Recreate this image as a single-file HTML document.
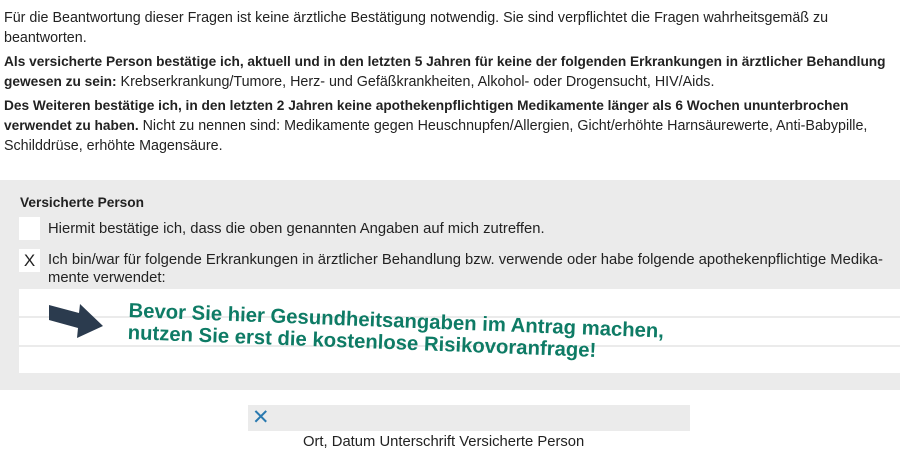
<!DOCTYPE html>
<html><head><meta charset="utf-8"><style>
body{margin:0;width:900px;height:463px;overflow:hidden;background:#fff;font-family:"Liberation Sans",sans-serif;color:#222;position:relative}
.t{position:absolute;left:4px;font-size:14.3px;line-height:20px;white-space:nowrap}
b{font-weight:bold;font-size:13.7px}
.s{font-size:14.8px}
.gray{position:absolute;left:0;top:180px;width:900px;height:210px;background:#ebebeb}
.f{position:absolute;left:19px;width:881px;background:#fff}
.gt{position:absolute;font-weight:bold;color:#0e7b65;font-size:20.3px;line-height:22px;white-space:nowrap;transform-origin:0 0}
</style></head><body>
<div class="t" style="top:8px">Für die Beantwortung dieser Fragen ist keine ärztliche Bestätigung notwendig. Sie sind verpflichtet die Fragen wahrheitsgemäß zu</div>
<div class="t" style="top:28px">beantworten.</div>
<div class="t" style="top:52px"><b>Als versicherte Person bestätige ich, aktuell und in den letzten 5 Jahren für keine der folgenden Erkrankungen in ärztlicher Behandlung</b></div>
<div class="t" style="top:72px"><b>gewesen zu sein:</b> Krebserkrankung/Tumore, Herz- und Gefäßkrankheiten, Alkohol- oder Drogensucht, HIV/Aids.</div>
<div class="t" style="top:96px"><b>Des Weiteren bestätige ich, in den letzten 2 Jahren keine apothekenpflichtigen Medikamente länger als 6 Wochen ununterbrochen</b></div>
<div class="t" style="top:116px"><b>verwendet zu haben.</b> Nicht zu nennen sind: Medikamente gegen Heuschnupfen/Allergien, Gicht/erhöhte Harnsäurewerte, Anti-Babypille,</div>
<div class="t" style="top:136px">Schilddrüse, erhöhte Magensäure.</div>
<div class="gray"></div>
<div class="t" style="top:193px;left:20px"><b>Versicherte Person</b></div>
<div style="position:absolute;left:19px;top:217px;width:21px;height:23px;background:#fff"></div>
<div class="t s" style="top:219px;left:48px">Hiermit bestätige ich, dass die oben genannten Angaben auf mich zutreffen.</div>
<div style="position:absolute;left:19px;top:249px;width:21px;height:23px;background:#fff;font-size:17px;line-height:23px;text-align:center">X</div>
<div class="t s" style="top:250px;left:48px">Ich bin/war für folgende Erkrankungen in ärztlicher Behandlung bzw. verwende oder habe folgende apothekenpflichtige Medika-</div>
<div class="t s" style="top:268px;left:48px">mente verwendet:</div>
<div class="f" style="top:289px;height:27px"></div>
<div class="f" style="top:318px;height:27px"></div>
<div class="f" style="top:347px;height:26px"></div>
<svg style="position:absolute;left:45px;top:290px" width="65" height="50"><polygon points="4,15 34,23 35,14 58,36 32,48 33,38 4,30" fill="#2b3b4e"/></svg>
<div class="gt" style="left:129px;top:300px;transform:rotate(2.2deg)">Bevor Sie hier Gesundheitsangaben im Antrag machen,<br>nutzen Sie erst die kostenlose Risikovoranfrage!</div>
<div style="position:absolute;left:248px;top:405px;width:442px;height:26px;background:#ebebeb"></div>
<div style="position:absolute;left:252px;top:405px;font-size:21px;line-height:26px;color:#2a7ab0">✕</div>
<div class="t s" style="top:432px;left:303px">Ort, Datum Unterschrift Versicherte Person</div>
</body></html>
